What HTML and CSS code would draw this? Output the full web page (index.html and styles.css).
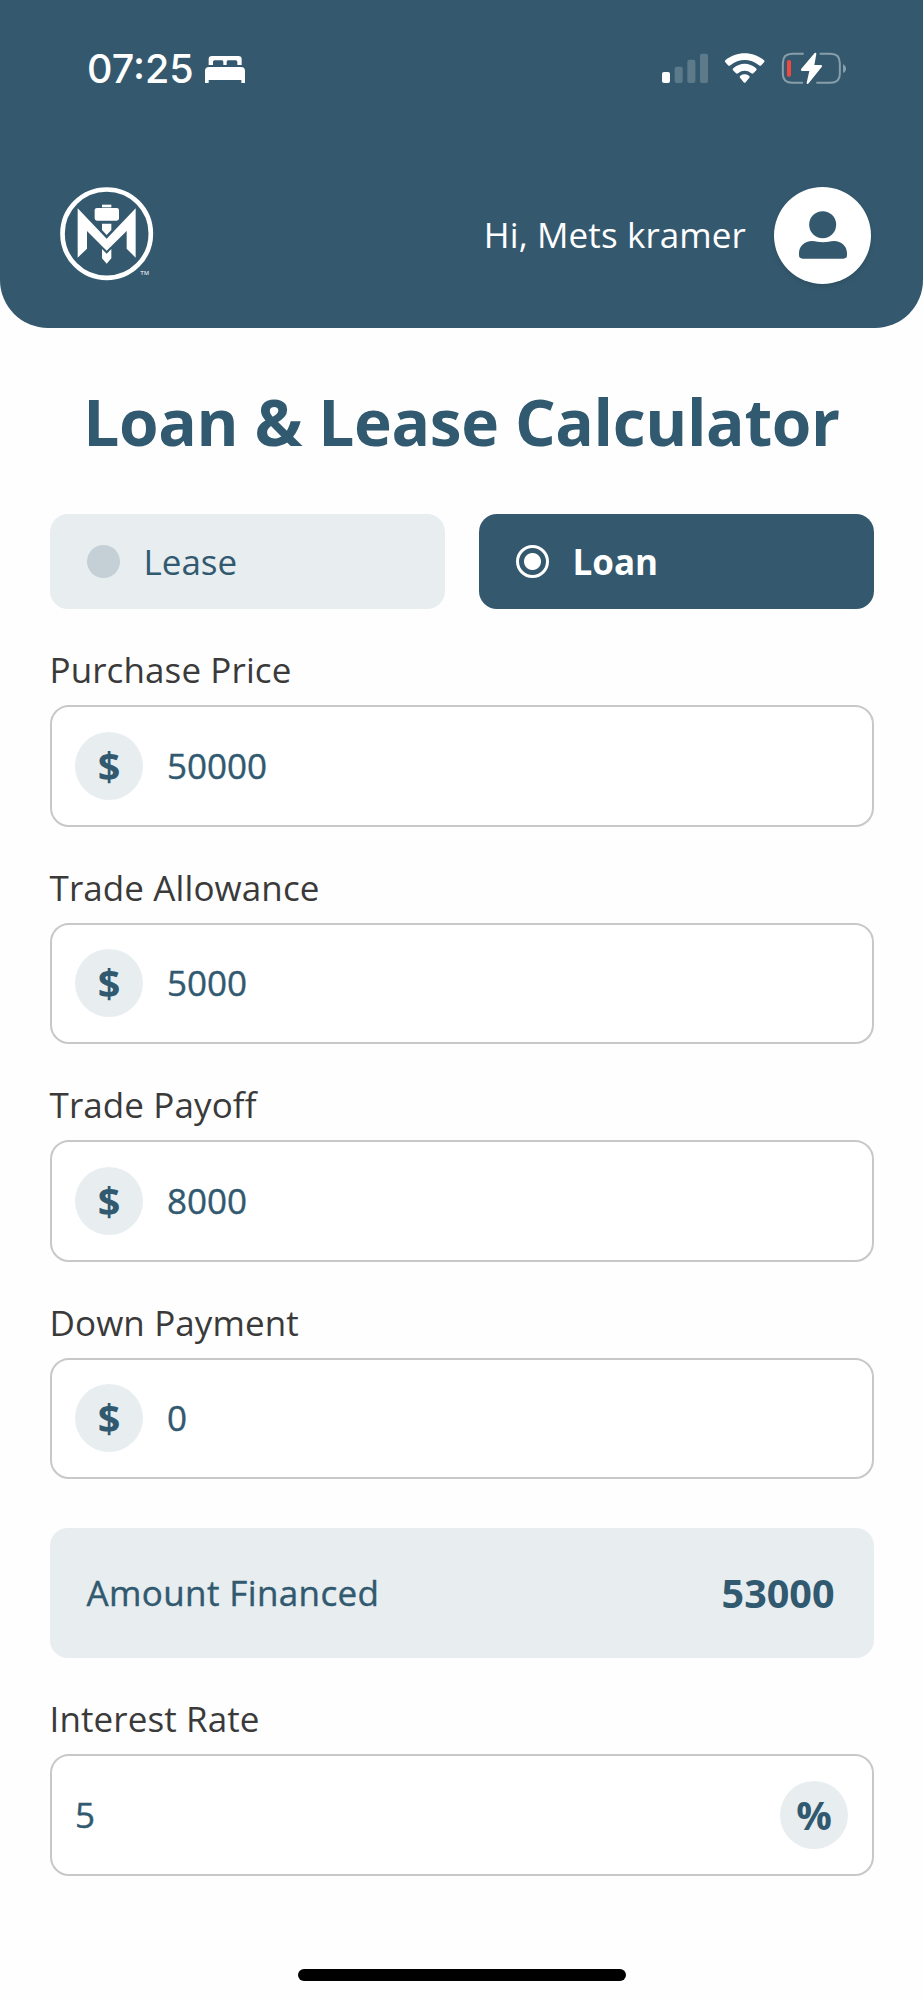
FILE: index.html
```html
<!DOCTYPE html>
<html lang="en">
<head>
<meta charset="utf-8">
<title>Loan &amp; Lease Calculator</title>
<link rel="stylesheet" href="styles.css">
</head>
<body>
<header class="header">
  <div class="status">
    <span class="time">07:25</span>
    <svg class="bed" viewBox="0 0 120 81" width="40" height="27">
      <path fill="#fff" d="M11 27V10Q11 0 21 0H100Q110 0 110 10V27H97V18Q97 13 92 13H69Q65 13 65 18V27H55V18Q55 13 51 13H29Q24 13 24 18V27ZM0 81V45Q0 33 12 33H108Q120 33 120 45V81H109V72H11V81Z"/>
    </svg>
    <svg class="indicators" viewBox="0 0 558 96" width="186" height="32">
      <g fill="#fff">
        <rect x="0" y="57" width="24" height="33" rx="6"/>
        <g opacity=".2">
          <rect x="38" y="41" width="24" height="49" rx="6"/>
          <rect x="76" y="20" width="24" height="70" rx="6"/>
          <rect x="114" y="2" width="24" height="88" rx="6"/>
        </g>
        <path d="M190 28Q187 25 190 22C224-6 272-6 306 22Q309 25 306 28L298 37Q295 40 291 37C265 16 231 16 205 37Q201 40 198 37Z"/>
        <path d="M213 52Q210 49 214 46C234 28 262 28 282 46Q286 49 283 52L274 61Q271 63 268 61C256 51 240 51 228 61Q225 63 222 61Z"/>
        <path d="M234 74Q231 71 235 68Q248 60 261 68Q265 71 262 74L251 88Q248 91 245 88Z"/>
      </g>
      <g fill="none" stroke="#fff" stroke-opacity=".42" stroke-width="6">
        <path d="M425 2.500H391Q362.500 2.500 362.500 30V63Q362.500 89.500 391 89.500H423"/>
        <path d="M473 2.500H505Q533.500 2.500 533.500 30V63Q533.500 89.500 505 89.500H463"/>
      </g>
      <path fill="#fff" fill-opacity=".42" d="M543 34Q552 38 552 47T543 60Z"/>
      <rect x="375" y="21" width="12" height="50" rx="5" fill="#f0483e"/>
      <path fill="#fff" d="M458 0Q463-3 463 3L457 36H476Q483 37 479 42L440 91Q434 96 434 89L442 54H421Q414 53 418 47Z"/>
    </svg>
  </div>
  <div class="brand">
    <svg class="logo" viewBox="0 0 375 360" width="125" height="120">
      <circle cx="185" cy="176" r="132.500" fill="none" stroke="#fff" stroke-width="14"/>
      <g fill="#fff">
        <rect x="171" y="89" width="28" height="8"/>
        <rect x="149" y="99" width="73" height="38" rx="7"/>
        <path d="M171 146H199V165L185 180L171 165ZM98 100L185 191L272 100V248L245 221V168L185 227L126 168V221L98 248ZM171 222L185 236L199 222V250L185 266L171 250Z"/>
      </g>
      <text class="tm" x="286" y="301">TM</text>
    </svg>
    <span class="greeting">Hi, Mets kramer</span>
    <span class="avatar">
      <svg viewBox="0 0 144 144" width="48" height="48">
        <g fill="#34596e"><circle cx="71" cy="41" r="40.500"/><path d="M0 127C0 105 17 90 39 90C52 90 58 94 72 94S92 90 105 90C127 90 144 105 144 127V133Q144 143 133 143H11Q0 143 0 133Z"/></g>
      </svg>
    </span>
  </div>
</header>
<main class="content">
  <h1 class="title">Loan &amp; Lease Calculator</h1>
  <div class="tabs">
    <div class="tab"><span class="radio"></span><span>Lease</span></div>
    <div class="tab tab-active"><span class="radio radio-on"></span><span>Loan</span></div>
  </div>
  <div class="label">Purchase Price</div>
  <div class="field"><span class="unit">$</span><span class="value">50000</span></div>
  <div class="label">Trade Allowance</div>
  <div class="field"><span class="unit">$</span><span class="value">5000</span></div>
  <div class="label">Trade Payoff</div>
  <div class="field"><span class="unit">$</span><span class="value">8000</span></div>
  <div class="label">Down Payment</div>
  <div class="field"><span class="unit">$</span><span class="value">0</span></div>
  <div class="total"><span class="value caption">Amount Financed</span><strong class="sum">53000</strong></div>
  <div class="label">Interest Rate</div>
  <div class="field field-end"><span class="value">5</span><span class="unit">%</span></div>
</main>
<div class="home"></div>
</body>
</html>
```
FILE: styles.css
```css
* { box-sizing: border-box; }
body {
  margin: 0;
  height: 2000px;
  display: flex;
  flex-direction: column;
  background: #fefefe;
  color: #31596f;
  font: 35px/48px "Open Sans", "Noto Sans", sans-serif;
}
svg { display: block; flex: none; overflow: visible; }
.header {
  height: 328px;
  flex: none;
  padding-top: 49px;
  background: #34596e;
  color: #fff;
  border-radius: 0 0 48px 48px;
}
.status { display: flex; height: 40px; padding: 0 75px 0 87px; align-items: center; }
.time { font: 500 39.5px/40px Inter, sans-serif; width: 118px; white-space: nowrap; }
.indicators { margin-left: auto; }
.brand { display: flex; align-items: center; height: 120px; margin-top: 86px; padding: 0 52px 0 45px; }
.tm { font: 18px "Liberation Sans", sans-serif; fill: #fff; }
.greeting { margin-left: auto; margin-right: 28px; letter-spacing: .1px; }
.avatar {
  width: 97px;
  height: 97px;
  flex: none;
  display: grid;
  place-items: center;
  border-radius: 50%;
  background: #fff;
  box-shadow: 0 2px 5px #0002;
}
.content { padding: 0 49.5px; }
.title { margin: 50px -20px 48px; font-size: 64px; line-height: 88px; font-weight: 700; letter-spacing: -.38px; text-align: center; white-space: nowrap; }
.tabs { display: grid; grid-template-columns: 1fr 1fr; gap: 34px; }
.tab { display: flex; align-items: center; gap: 24px; height: 95px; padding-left: 37px; border-radius: 18px; background: #e8edf0; }
.tab-active { background: #34596e; color: #fff; font-weight: 700; }
.radio { width: 33px; height: 33px; border-radius: 50%; background: #c4cfd6; }
.radio-on { border: 3px solid #fff; background: radial-gradient(circle, #fff 8px, #34596e 9px); }
.label { margin: 37px 0 11px; color: #3a3a3a; letter-spacing: .1px; }
.field {
  display: flex;
  align-items: center;
  gap: 24px;
  height: 121.5px;
  padding: 0 23.5px;
  border: 2px solid #c8c8c8;
  border-radius: 19px;
  background: #fff;
}
.value { -webkit-text-stroke: .4px currentColor; }
.caption { letter-spacing: .38px; }
.field-end { justify-content: space-between; }
.unit {
  width: 68px;
  height: 68px;
  border-radius: 50%;
  background: #e8edf0;
  font-size: 39.5px;
  line-height: 68px;
  font-weight: 700;
  text-align: center;
}
.total {
  display: flex;
  justify-content: space-between;
  align-items: center;
  height: 130px;
  margin-top: 49px;
  padding: 0 39px 0 37px;
  border-radius: 18px;
  background: #e8edf0;
}
.sum { font-size: 39.5px; }
.home { width: 328px; height: 12px; margin: auto auto 19px; border-radius: 6px; background: #000; }
```
